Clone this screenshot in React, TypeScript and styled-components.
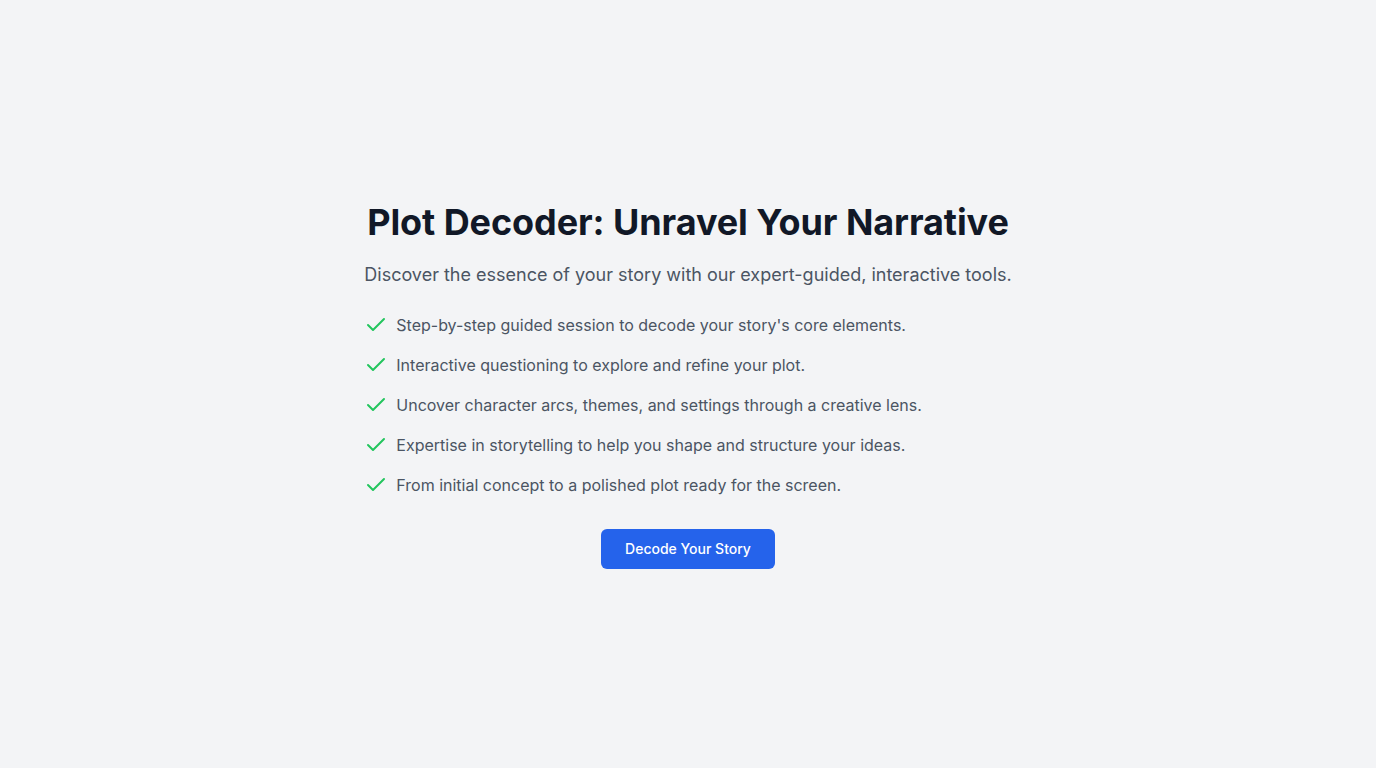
import React from "react";
import styled, { createGlobalStyle } from "styled-components";
import { Check } from "lucide-react";

const GlobalStyle = createGlobalStyle`
  html, body { margin: 0; padding: 0; }
  body {
    background: #f3f4f6;
    font-family: Inter, "Noto Sans", sans-serif;
    -webkit-font-smoothing: antialiased;
  }
`;

const Page = styled.main`
  min-height: 100vh;
  display: flex;
  align-items: center;
  justify-content: center;
`;

const Content = styled.div`
  display: flex;
  flex-direction: column;
  align-items: center;
  text-align: center;
`;

const Title = styled.h1`
  margin: 0 0 16px;
  font-size: 36px;
  line-height: 45px;
  font-weight: 700;
  letter-spacing: -0.08px;
  color: #111827;
`;

const Subtitle = styled.p`
  margin: 0 0 24px;
  font-size: 18px;
  line-height: 28px;
  color: #4b5563;
`;

const List = styled.ul`
  list-style: none;
  margin: 0;
  padding: 0;
  align-self: stretch;
  text-align: left;
  display: flex;
  flex-direction: column;
  gap: 16px;
`;

const Item = styled.li`
  display: flex;
  align-items: center;
  font-size: 16px;
  line-height: 24px;
  color: #4b5563;
  svg {
    flex-shrink: 0;
    margin-right: 8px;
    color: #22c55e;
  }
`;

const Button = styled.button`
  margin-top: 32px;
  padding: 8px 24px;
  border: none;
  border-radius: 6px;
  background: #2563eb;
  color: #ffffff;
  font-family: inherit;
  font-size: 14px;
  line-height: 24px;
  font-weight: 500;
  cursor: pointer;
`;

const features = [
  "Step-by-step guided session to decode your story's core elements.",
  "Interactive questioning to explore and refine your plot.",
  "Uncover character arcs, themes, and settings through a creative lens.",
  "Expertise in storytelling to help you shape and structure your ideas.",
  "From initial concept to a polished plot ready for the screen.",
];

export default function App() {
  return (
    <>
      <GlobalStyle />
      <Page>
        <Content>
          <Title>Plot Decoder: Unravel Your Narrative</Title>
          <Subtitle>
            Discover the essence of your story with our expert-guided, interactive tools.
          </Subtitle>
          <List>
            {features.map((f) => (
              <Item key={f}>
                <Check size={24} strokeWidth={2} />
                {f}
              </Item>
            ))}
          </List>
          <Button>Decode Your Story</Button>
        </Content>
      </Page>
    </>
  );
}
